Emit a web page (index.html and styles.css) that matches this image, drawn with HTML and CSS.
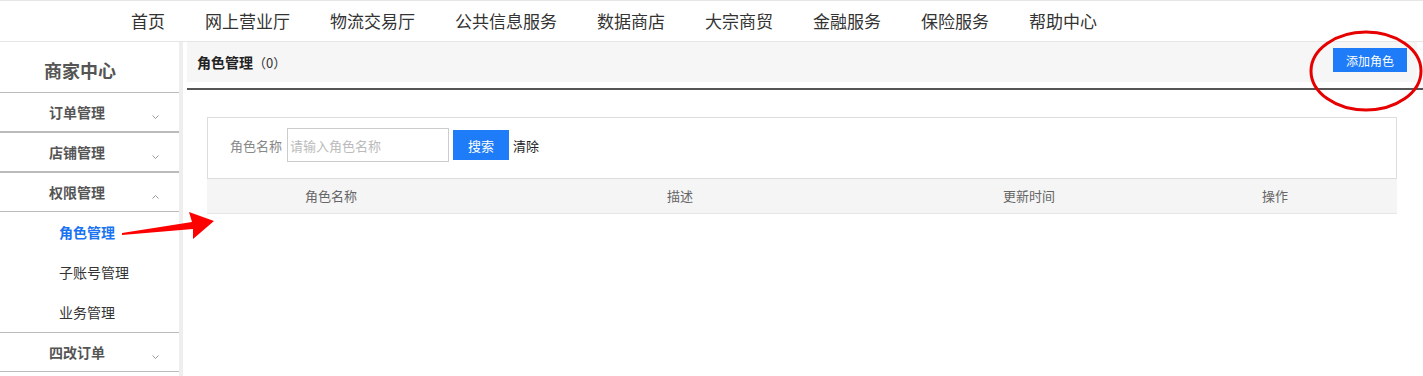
FILE: index.html
```html
<!DOCTYPE html>
<html>
<head>
    <meta charset="UTF-8">
    <title>商家中心 - 角色管理</title>
    <link rel="stylesheet" href="styles.css">
</head>
<body>
    <div class="topnav">
        <ul class="nav-list">
            <li>首页</li>
            <li>网上营业厅</li>
            <li>物流交易厅</li>
            <li>公共信息服务</li>
            <li>数据商店</li>
            <li>大宗商贸</li>
            <li>金融服务</li>
            <li>保险服务</li>
            <li>帮助中心</li>
        </ul>
    </div>

    <div class="page">
        <aside class="sidebar">
            <div class="side-title">商家中心</div>

            <div class="menu-head">订单管理
                <svg class="caret" width="7" height="4" viewBox="0 0 7 4"><polyline points="0.5,0.5 3.5,3.5 6.5,0.5" /></svg>
            </div>
            <div class="menu-head">店铺管理
                <svg class="caret" width="7" height="4" viewBox="0 0 7 4"><polyline points="0.5,0.5 3.5,3.5 6.5,0.5" /></svg>
            </div>
            <div class="menu-head">权限管理
                <svg class="caret" width="7" height="4" viewBox="0 0 7 4"><polyline points="0.5,3.5 3.5,0.5 6.5,3.5" /></svg>
            </div>
            <ul class="submenu">
                <li class="active">角色管理</li>
                <li>子账号管理</li>
                <li>业务管理</li>
            </ul>
            <div class="menu-head">四改订单
                <svg class="caret" width="7" height="4" viewBox="0 0 7 4"><polyline points="0.5,0.5 3.5,3.5 6.5,0.5" /></svg>
            </div>
        </aside>

        <main class="content">
            <div class="content-top">
                <div class="content-head">
                    <h3 class="content-title">角色管理<span class="count">（0）</span></h3>
                    <button class="btn btn-add">添加角色</button>
                </div>
            </div>

            <div class="search-box">
                <label class="search-label">角色名称</label>
                <input class="search-input" type="text" placeholder="请输入角色名称">
                <button class="btn btn-search">搜索</button>
                <span class="search-clear">清除</span>
            </div>

            <div class="table-head">
                <div>角色名称</div>
                <div>描述</div>
                <div>更新时间</div>
                <div>操作</div>
            </div>
        </main>
    </div>

    <!-- anotaciones en rojo -->
    <svg class="marks" width="1423" height="376" viewBox="0 0 1423 376">
        <ellipse cx="1366" cy="71" rx="55" ry="39" fill="none" stroke="#e60000" stroke-width="3" />
        <polygon points="122,233 192,222 189,212 214,221 193,239 193,229 122,235" fill="#f00" />
    </svg>
</body>
</html>
```

FILE: styles.css
```css
body {
    margin: 0;
    font-family: "Noto Sans CJK SC", "Liberation Sans", sans-serif;
    color: #333;
    background-color: #fff;
    position: relative;
    height: 376px;
    overflow: hidden;
}
.topnav {
    height: 40px;
    border-top: 1px solid #e6e6e6;
    border-bottom: 1px solid #e6e6e6;
}
.nav-list {
    display: flex;
    margin: 0;
    padding: 0 0 0 111px;
    list-style: none;
}
.nav-list li {
    padding: 0 20px;
    font-size: 17px;
    line-height: 40px;
    color: #333;
}
.page {
    display: flex;
}
.sidebar {
    width: 179px;
    border-right: 4px solid #eee;
    height: 334px;
}
.side-title {
    height: 44px;
    padding-top: 6px;
    line-height: 44px;
    font-size: 18px;
    font-weight: bold;
    color: #555;
    padding-left: 44px;
}
.menu-head {
    display: flex;
    justify-content: space-between;
    align-items: center;
    height: 38px;
    line-height: 38px;
    padding: 0 20px 0 49px;
    border-top: 1px solid #bbb;
    border-bottom: 1px solid #bbb;
    font-size: 14px;
    font-weight: bold;
    color: #555;
}
.caret {
    margin-top: 10px;
    fill: none;
    stroke: #999;
    stroke-width: 1;
}
.submenu {
    margin: 0;
    padding: 0;
    list-style: none;
}
.submenu li {
    height: 40px;
    line-height: 41px;
    padding-left: 59px;
    font-size: 14px;
    color: #333;
}
.submenu li.active {
    color: #1a73f0;
    font-weight: bold;
}
.content {
    flex: 1;
}
.content-top {
    margin-left: 4px;
    padding-bottom: 6px;
    border-bottom: 2px solid #555;
}
.content-head {
    display: flex;
    justify-content: space-between;
    align-items: flex-start;
    height: 40px;
    margin-right: 6px;
    padding: 0 10px;
    background-color: #f6f6f6;
}
.content-title {
    margin: 0;
    font-size: 14px;
    line-height: 40px;
    color: #222;
}
.count {
    font-weight: normal;
    font-size: 13px;
    color: #333;
}
.btn {
    border: none;
    background-color: #1e7cf8;
    color: #fff;
    font-family: inherit;
    padding: 0;
    cursor: pointer;
}
.btn-add {
    width: 74px;
    height: 24px;
    margin-top: 6px;
    font-size: 12px;
}
.search-box {
    display: flex;
    align-items: center;
    margin: 27px 26px 0 24px;
    padding: 10px 22px 16px;
    border: 1px solid #ddd;
}
.search-label {
    font-size: 13px;
    color: #888;
    margin-right: 5px;
}
.search-input {
    width: 162px;
    height: 34px;
    box-sizing: border-box;
    border: 1px solid #ccc;
    padding: 0 2px;
    font-family: inherit;
    font-size: 13px;
    outline: none;
}
.search-input::placeholder {
    color: #bbb;
}
.btn-search {
    width: 56px;
    height: 30px;
    margin-left: 4px;
    font-size: 13px;
}
.search-clear {
    margin-left: 4px;
    font-size: 13px;
    color: #222;
}
.table-head {
    display: grid;
    grid-template-columns: 248px 450px 248px 1fr;
    margin: 0 26px 0 24px;
    height: 34px;
    line-height: 34px;
    background-color: #f5f5f5;
    border-bottom: 1px solid #e6e6e6;
    font-size: 13px;
    color: #666;
    text-align: center;
}
.marks {
    position: absolute;
    left: 0;
    top: 0;
    pointer-events: none;
}
```
